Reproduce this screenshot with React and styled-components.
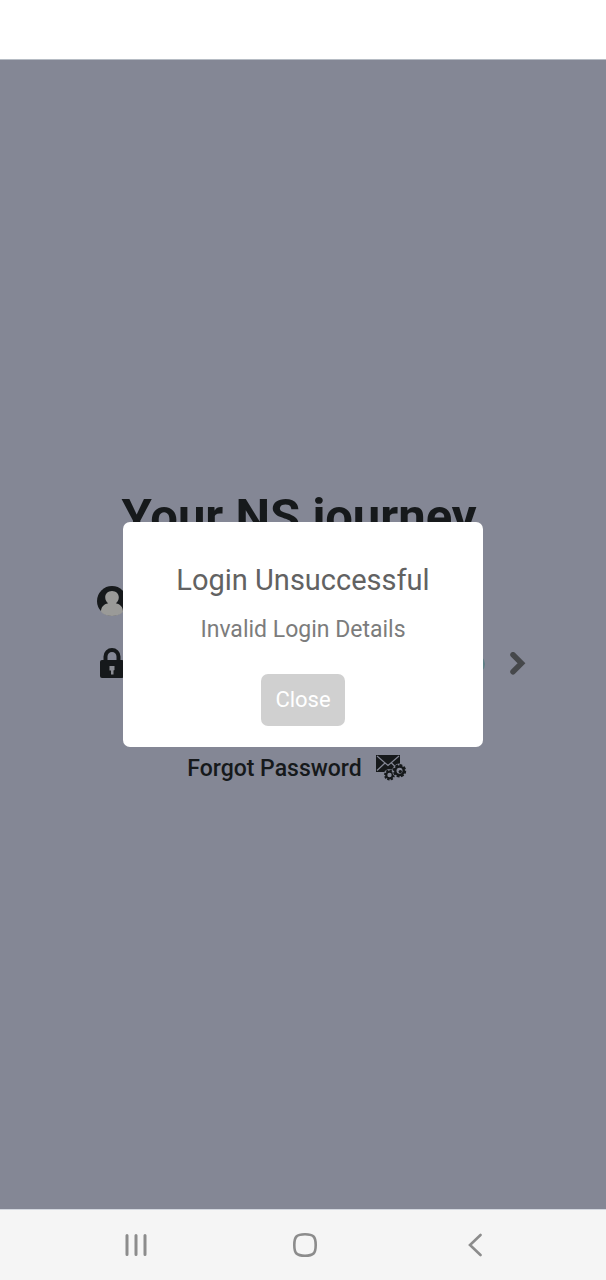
import React, { useState } from "react";
import styled, { createGlobalStyle } from "styled-components";

const ink = "#16191b";

const GlobalStyle = createGlobalStyle`
  *, *::before, *::after { box-sizing: border-box; }
  body {
    margin: 0;
    background: #ffffff;
    font-family: Roboto, "Liberation Sans", sans-serif;
  }
  h1, h2, p { margin: 0; }
  button, input { font: inherit; }
`;

const Phone = styled.div`
  min-height: 100vh;
  display: flex;
  flex-direction: column;
`;

const StatusBar = styled.header`
  height: 60px;
  flex: none;
  background: #ffffff;
  border-bottom: 1px solid #b6bcc4;
`;

const Screen = styled.main`
  position: relative;
  flex: 1;
  display: flex;
  flex-direction: column;
  justify-content: center;
  background: #848795;
  color: ${ink};
`;

const Title = styled.h1`
  padding-right: 8px;
  margin-bottom: 38px;
  font-size: 49px;
  line-height: 60px;
  font-weight: 700;
  text-align: center;
`;

const LoginForm = styled.form`
  display: flex;
  flex-direction: column;
  gap: 28px;
  padding: 0 80px 0 96px;
`;

const Field = styled.label`
  display: flex;
  align-items: center;
  height: 34px;
`;

const FieldInput = styled.input`
  flex: 1;
  min-width: 0;
  height: 34px;
  margin-left: 16px;
  padding: 0;
  border: 0;
  outline: 0;
  background: transparent;
  color: ${ink};
  font-size: 22px;
`;

const RevealDot = styled.span`
  width: 20px;
  height: 20px;
  margin-right: 25px;
  border-radius: 50%;
  background: #5f7f86;
`;

const IconButton = styled.button`
  display: flex;
  align-items: center;
  justify-content: center;
  padding: 0;
  border: 0;
  background: transparent;
  color: ${(p) => p.$color};
  cursor: pointer;
`;

const ForgotLink = styled.a`
  display: flex;
  align-items: center;
  align-self: center;
  gap: 14px;
  margin: 74px 12px 0 0;
  color: ${ink};
  font-size: 23px;
  line-height: 28px;
  font-weight: 500;
  text-decoration: none;
`;

const Overlay = styled.div`
  position: absolute;
  inset: 0;
  display: flex;
  align-items: center;
  justify-content: center;
`;

const Dialog = styled.section`
  display: flex;
  flex-direction: column;
  align-items: center;
  width: 360px;
  max-width: calc(100% - 48px);
  padding: 40px 16px 21px;
  border-radius: 7px;
  background: #ffffff;
  text-align: center;
`;

const DialogTitle = styled.h2`
  color: #626262;
  font-size: 29px;
  line-height: 36px;
  font-weight: 400;
`;

const DialogText = styled.p`
  margin-top: 18px;
  color: #7c7c7c;
  font-size: 23px;
  line-height: 28px;
`;

const CloseButton = styled.button`
  min-width: 84px;
  height: 52px;
  margin-top: 30px;
  padding: 0 12px;
  border: 0;
  border-radius: 7px;
  background: #d0d0d0;
  color: #ffffff;
  font-size: 22px;
  line-height: 28px;
  cursor: pointer;
`;

const SystemNav = styled.nav`
  display: grid;
  grid-template-columns: repeat(3, 1fr);
  flex: none;
  height: 71px;
  padding: 0 46px 0 50px;
  border-top: 1px solid #d3d7df;
  background: #f5f5f5;
`;

const UserIcon = () => (
  <svg width="32" height="32" viewBox="0 0 32 32" aria-hidden="true">
    <g transform="translate(1 0)">
      <circle cx="15" cy="15" r="15" fill="#16191b" />
      <path
        d="M15 5c3.900 0 6.800 2.800 6.800 6.200 0 2.700-1.300 4.700-3 6 4.700 1 7.200 4 7.200 8.500C23.500 28.700 19.500 30 15 30S6.500 28.700 4 25.700C4 21.200 6.500 18.200 11.200 17.200c-1.700-1.300-3-3.300-3-6C8.200 7.800 11.100 5 15 5z"
        fill="#9a9a98"
      />
    </g>
  </svg>
);

const LockIcon = () => (
  <svg width="32" height="32" viewBox="0 0 32 32" aria-hidden="true">
    <path d="M9.500 13V8.500a6.500 6.500 0 0 1 13 0V13" fill="none" stroke="#16191b" strokeWidth="4" />
    <rect x="4" y="12" width="24" height="18" rx="2" fill="#16191b" />
    <path d="M13.500 18h5v4l-1 .5v4H15v-4h-1.500z" fill="#8b8d94" />
  </svg>
);

const ChevronIcon = () => (
  <svg width="16" height="24" viewBox="0 0 16 24" aria-hidden="true">
    <path
      d="M3 2.800L11.500 11.300 3 19.800"
      fill="none"
      stroke="#46484b"
      strokeWidth="5.500"
      strokeLinecap="round"
      strokeLinejoin="miter"
    />
  </svg>
);

const Gear = ({ x, y, r, hole }) => (
  <g transform={`translate(${x} ${y})`}>
    <circle r={r + 1.8} fill="#848795" />
    <circle r={r} fill="#16191b" />
    <circle
      r={r}
      fill="none"
      stroke="#16191b"
      strokeWidth="2.400"
      pathLength="16"
      strokeDasharray="1.300 0.700"
    />
    <circle r={hole} fill="#848795" />
  </g>
);

const MailSettingsIcon = () => (
  <svg width="31" height="28" viewBox="0 0 31 28" aria-hidden="true">
    <path d="M0 0h24v17H0z" fill="#16191b" />
    <path
      d="M1 1l11 9.500L23 1M1 15.500l8-7.500M23 15.500L15.500 8"
      fill="none"
      stroke="#848795"
      strokeWidth="1.200"
    />
    <Gear x={13.5} y={20} r={4.3} hole={2.2} />
    <Gear x={23.5} y={15.8} r={5.5} hole={3} />
    <circle cx="24.300" cy="16.600" r="1.700" fill="#16191b" />
  </svg>
);

const RecentsIcon = () => (
  <svg width="24" height="24" viewBox="0 0 24 24" aria-hidden="true">
    <path
      d="M4 2.500v19M13 2.500v19M22 2.500v19"
      fill="none"
      stroke="currentColor"
      strokeWidth="3"
      strokeLinecap="round"
    />
  </svg>
);

const HomeIcon = () => (
  <svg width="26" height="26" viewBox="0 0 26 26" aria-hidden="true">
    <path
      d="M13 2.300c8.500 0 10.700 2.200 10.700 10.700S21.500 23.700 13 23.700 2.300 21.500 2.300 13 4.500 2.300 13 2.300z"
      fill="none"
      stroke="currentColor"
      strokeWidth="2.600"
    />
  </svg>
);

const BackIcon = () => (
  <svg width="14" height="24" viewBox="0 0 14 24" aria-hidden="true">
    <path
      d="M12.500 2L2 12l10.500 10"
      fill="none"
      stroke="currentColor"
      strokeWidth="2.600"
      strokeLinecap="round"
    />
  </svg>
);

export default function App() {
  const [open, setOpen] = useState(true);

  return (
    <>
      <GlobalStyle />
      <Phone>
        <StatusBar />
        <Screen>
          <Title>Your NS journey</Title>
          <LoginForm
            onSubmit={(event) => {
              event.preventDefault();
              setOpen(true);
            }}
          >
            <Field>
              <UserIcon />
              <FieldInput type="text" aria-label="Username" autoComplete="username" />
            </Field>
            <Field as="div">
              <LockIcon />
              <FieldInput type="password" aria-label="Password" autoComplete="current-password" />
              <RevealDot />
              <IconButton type="submit" aria-label="Log in" $color="#46484b">
                <ChevronIcon />
              </IconButton>
            </Field>
          </LoginForm>
          <ForgotLink href="#forgot">
            Forgot Password
            <MailSettingsIcon />
          </ForgotLink>

          {open && (
            <Overlay>
              <Dialog role="dialog" aria-modal="true" aria-labelledby="dialog-title">
                <DialogTitle id="dialog-title">Login Unsuccessful</DialogTitle>
                <DialogText>Invalid Login Details</DialogText>
                <CloseButton type="button" onClick={() => setOpen(false)}>
                  Close
                </CloseButton>
              </Dialog>
            </Overlay>
          )}
        </Screen>
        <SystemNav aria-label="System">
          <IconButton type="button" aria-label="Recent apps" $color="#8c8c8c">
            <RecentsIcon />
          </IconButton>
          <IconButton type="button" aria-label="Home" $color="#8c8c8c">
            <HomeIcon />
          </IconButton>
          <IconButton type="button" aria-label="Back" $color="#8c8c8c">
            <BackIcon />
          </IconButton>
        </SystemNav>
      </Phone>
    </>
  );
}
